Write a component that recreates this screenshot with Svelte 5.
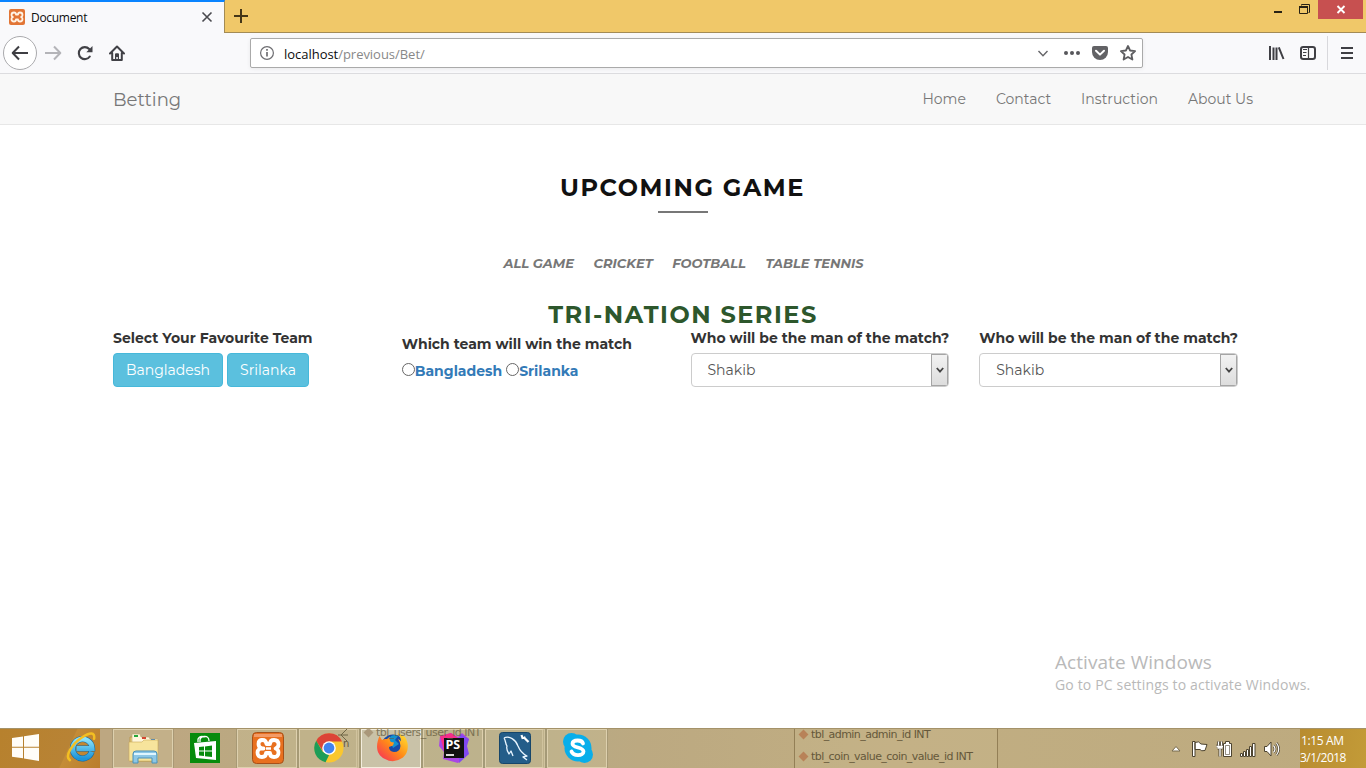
<script>
  const links = ['Home', 'Contact', 'Instruction', 'About Us'];
  const filters = ['ALL GAME', 'CRICKET', 'FOOTBALL', 'TABLE TENNIS'];
</script>

<div class="screen">
  <header class="titlebar">
    <div class="tab">
      <svg class="favicon" width="16" height="16" viewBox="0 0 32 32"><rect width="32" height="32" rx="4" fill="#e27535" /><path d="M10 7q4 0 4 4h4q0-4 4-4 5 0 5 5 0 3-3 4 3 1 3 4 0 5-5 5-4 0-4-4h-4q0 4-4 4-5 0-5-5 0-3 3-4-3-1-3-4 0-5 5-5z" fill="none" stroke="#fff3e5" stroke-width="3.600" stroke-linejoin="round" /></svg>
      <span class="tab-title">Document</span>
      <svg class="tab-close" width="12" height="12" viewBox="0 0 12 12"><path d="M1.500 1.500l9 9M10.500 1.500l-9 9" stroke="#4a4a4f" stroke-width="1.600" /></svg>
    </div>
    <svg class="plus" width="14" height="14" viewBox="0 0 14 14"><path d="M7 0v14M0 7h14" stroke="#443618" stroke-width="2" /></svg>
    <div class="controls">
      <svg width="92" height="19" viewBox="0 0 92 19"><path d="M0 12h8" stroke="#282214" stroke-width="2" /><g fill="none" stroke="#282214"><path d="M27.500 5.500v-1h8v8h-1" /><path d="M25.500 6.500h8v7h-8z" /><path d="M25 7h9" stroke-width="2" /></g></svg>
      <div class="close"><svg width="10" height="9" viewBox="0 0 10 9"><path d="M1.500 1l7 7M8.500 1l-7 7" stroke="#fff" stroke-width="1.900" /></svg></div>
    </div>
  </header>

  <div class="toolbar">
    <div class="nav-icons">
      <span class="back"><svg width="18" height="16" viewBox="0 0 18 16"><path d="M17 8H2M8 1.500L1.700 8 8 14.500" fill="none" stroke="#3e3e43" stroke-width="2" stroke-linejoin="round" /></svg></span>
      <svg class="fwd" width="17" height="16" viewBox="0 0 17 16"><path d="M0 8h15M9 1.500L15.300 8 9 14.500" fill="none" stroke="#b4b4b8" stroke-width="2" stroke-linejoin="round" /></svg>
      <svg class="reload" width="16" height="16" viewBox="0 0 16 16"><path d="M12.800 11.500A6 6 0 1 1 12.200 4" fill="none" stroke="#414146" stroke-width="2.100" stroke-linecap="round" /><path d="M15.500 1v6.200H9.300z" fill="#414146" /></svg>
      <svg class="home" width="16" height="16" viewBox="0 0 16 16"><path d="M1 8.500l7-7 7 7M3.200 8v7h9.600V8" fill="none" stroke="#414146" stroke-width="2" stroke-linecap="round" stroke-linejoin="round" /><path d="M6 15V9.300q0-1 1-1h2q1 0 1 1V15H8.800v-3H7.300v3z" fill="#414146" /></svg>
    </div>
    <div class="address">
      <svg width="16" height="16" viewBox="0 0 16 16"><circle cx="8" cy="8" r="6.400" fill="none" stroke="#6e6e72" stroke-width="1.200" /><path d="M8 7v4.500M8 4v1.800" stroke="#6e6e72" stroke-width="1.700" /></svg>
      <span class="url"><b>localhost</b>/previous/Bet/</span>
      <svg class="addr-icons" width="104" height="18" viewBox="0 0 104 18">
        <path d="M4.500 7l4.500 4.700L13.500 7" fill="none" stroke="#656568" stroke-width="1.400" />
        <g fill="#57575b"><circle cx="32" cy="9" r="2" /><circle cx="38" cy="9" r="2" /><circle cx="44" cy="9" r="2" /></g>
        <path d="M60 1.900h12q2 0 2 2V8a8 8 0 0 1-16 0V3.900q0-2 2-2z" fill="#626265" /><path d="M62 6.800l4 3.800 4-3.800" fill="none" stroke="#fff" stroke-width="2" stroke-linecap="round" stroke-linejoin="round" />
        <path d="M94 2l2.100 4.500 5 .6-3.700 3.400 1 5L94 13l-4.400 2.500 1-5-3.700-3.400 5-.6z" fill="none" stroke="#5d5d60" stroke-width="1.800" stroke-linejoin="round" />
      </svg>
    </div>
    <svg class="right-icons" width="98" height="34" viewBox="0 0 98 34">
      <path d="M2 10v14M5.500 11.500V24M8.500 11.500V24M10.800 11.300L15.500 23" stroke="#3f3f44" stroke-width="2" />
      <rect x="33" y="11" width="14" height="12" rx="2.200" fill="none" stroke="#3f3f44" stroke-width="2" /><path d="M40.500 11v12" stroke="#3f3f44" stroke-width="1.200" /><path d="M35 13.500h4M35 16.500h3.500M35 19.500h3" stroke="#3f3f44" />
      <path d="M59.500 0v34" stroke="#d8d8dc" /><path d="M73 12h12M73 17h12M73 22h12" stroke="#3f3f44" stroke-width="2" />
    </svg>
  </div>

  <nav class="navbar">
    <span class="brand">Betting</span>
    <div class="links">{#each links as l}<a class="link" href="#top">{l}</a>{/each}</div>
  </nav>

  <main>
    <h2 class="heading">UPCOMING GAME</h2>
    <div class="rule"></div>
    <div class="filters">{#each filters as f}<span>{f}</span>{/each}</div>
    <h2 class="series">TRI-NATION SERIES</h2>
    <div class="grid">
      <section>
        <div class="label">Select Your Favourite Team</div>
        <div class="buttons"><button class="b1">Bangladesh</button><button class="b2">Srilanka</button></div>
      </section>
      <section class="win">
        <div class="label">Which team will win the match</div>
        <div class="radios"><i></i><span class="r1">Bangladesh</span><i></i><span>Srilanka</span></div>
      </section>
      {#each [0, 1] as n}
        <section>
          <div class="label">Who will be the man of the match?</div>
          <div class="select"><span>Shakib</span><div class="arrow"><svg width="8" height="7" viewBox="0 0 8 7"><path d="M.8 1L4 4.700 7.200 1" fill="none" stroke="#444" stroke-width="1.800" /></svg></div></div>
        </section>
      {/each}
    </div>
  </main>

  <div class="watermark"><div class="w1">Activate Windows</div><div class="w2">Go to PC settings to activate Windows.</div></div>

  <footer class="taskbar">
    <div class="ghost panel"><div><i></i><span>tbl_admin_admin_id INT</span></div><div><i></i><span>tbl_coin_value_coin_value_id INT</span></div></div>
    <div class="start">
      <svg width="27" height="27" viewBox="0 0 27 27"><path d="M0 4l11-1.600v10.400H0zM12 2.300L27 0v12.800H12zM0 13.800h11v10.500L0 22.700zM12 13.800h15V27l-15-2.400z" fill="#fffdf8" /></svg>
      <svg class="ie" width="31" height="31" viewBox="0 0 32 32">
        <defs><linearGradient id="ieg" x1="0" y1="0" x2="0" y2="1"><stop offset="0" stop-color="#8be3fb" /><stop offset="1" stop-color="#1d94d8" /></linearGradient></defs>
        <path d="M26.500 20.500A10 10 0 1 1 27 17H11" fill="none" stroke="#15699f" stroke-width="6.200" />
        <path d="M26.500 20.500A10 10 0 1 1 27 17H11" fill="none" stroke="url(#ieg)" stroke-width="5" />
        <path d="M4 29C-2 25 7 12 16 6s14-6 13 1" fill="none" stroke="#f3bf22" stroke-width="2.600" stroke-linecap="round" />
      </svg>
    </div>
    <div class="apps">
      <div class="app"><svg width="34" height="34" viewBox="0 0 34 34">
        <path d="M3 6h9l2 3h15l1 1v20H3z" fill="#ebcf7b" stroke="#ba9950" /><path d="M5 3h8l1 3h8l1 2h8v7H5z" fill="#fff7dc" stroke="#b9a775" stroke-width=".6" /><path d="M7 4h4v2H7z" fill="#25a83a" /><path d="M15 6h4v2h-4z" fill="#d44731" /><path d="M24 8h4v2h-4z" fill="#3480ce" /><path d="M2 11h13l2-2h14v21H2z" fill="#f7e49c" stroke="#caa857" stroke-width=".6" />
        <path d="M6 32v-9q0-3 3-3h18q3 0 3 3v9h-5v-5H11v5z" fill="#8dc7e5" stroke="#4b91b9" /><path d="M7 23h22" stroke="#dff6ff" stroke-width="2" /></svg></div>
      <div class="app plain"><svg width="30" height="30" viewBox="0 0 30 30"><path d="M0 0h30v30H0z" fill="#078b0c" /><path d="M4 10l22-2v19L6 25z" fill="#fff" /><path d="M10 9V7q0-3 4-3.500 5-.5 5 4.500M8 9V6q2-4 7-2" fill="none" stroke="#fff" stroke-width="1.300" /><path d="M9 14l5-.5v4H9zM15 13.400l7-.8v5h-7zM9 18.500h5V23l-5-.5zM15 18.500h7V24l-7-.8z" fill="#078b0c" /></svg></div>
      <div class="app"><svg width="32" height="32" viewBox="0 0 32 32"><rect x=".5" y=".5" width="31" height="31" rx="4" fill="#e8701f" stroke="#a65019" /><path d="M2 2h28v3H2z" fill="#f39b66" /><path d="M10.500 8q3.500 0 4 4h3.500q0-4 4-4 4.500 0 4.500 4.500 0 3-3 4 3 1 3 4 0 4.500-4.500 4.500-4 0-4-4h-4q0 4-4 4-4.500 0-4.500-4.500 0-3 3-4h3" fill="none" stroke="#fff" stroke-width="3.800" stroke-linecap="round" stroke-linejoin="round" /><path d="M10.500 8q-4 0-4 4 0 3 3 4.500" fill="none" stroke="#fff" stroke-width="3.800" /><path d="M14 16.500h5" stroke="#fff" stroke-width="2.500" /></svg></div>
      <div class="app stack"><svg width="30" height="30" viewBox="0 0 30 30"><circle cx="15" cy="15" r="14.500" fill="#fac72f" /><path d="M2.200 8A14.500 14.500 0 0 1 28 8.500H15L8.800 18z" fill="#dc4437" /><path d="M2.200 7.800l6.500 11 6.300 3.500-3.500 7A14.500 14.500 0 0 1 2.200 7.800z" fill="#1d9d58" /><circle cx="15" cy="15" r="6.800" fill="#fff" /><circle cx="15" cy="15" r="5.400" fill="#4283ef" /></svg></div>
      <div class="app active"><svg width="32" height="32" viewBox="0 0 32 32">
        <defs><linearGradient id="fox" x1="1" y1="0" x2="0" y2="1"><stop stop-color="#ffe833" /><stop offset=".5" stop-color="#ff8a18" /><stop offset="1" stop-color="#f62363" /></linearGradient></defs>
        <circle cx="17" cy="14" r="11.500" fill="#174aa7" /><path d="M13 6q4-5 9-2l-3 4 4 4-6 4z" fill="#1392cf" />
        <path d="M3.500 4l2.500 4q2-1.500 5-1l3-2.500q-1 3.500 1 5.500l3 .5-1 3-4 1.500q0 4.500 5 5 6 0 6.500-6 0-4-2.500-7 2.500 1 3 2.500 0-5-4-8.500 9 2 10.500 10 1.500 9-4.500 14.500-9 6.500-18 1.500C-1 22 0 12 3.500 4z" fill="url(#fox)" /></svg></div>
      <div class="app"><svg width="32" height="32" viewBox="0 0 32 32"><path d="M2 4l11-3 7 4 4-4 7 6-3 7 2 8-10 9-15-4 1-7-5-6z" fill="#aa46e5" /><path d="M2 4l11-3 7 5-14 13z" fill="#f52e89" /><path d="M22 2l9 5-2 7 2 8-10 9z" fill="#8148f2" /><path d="M6 6h20v20H6z" fill="#111" /><path d="M8 23h8" stroke="#fff" stroke-width="1.700" /><text x="7.500" y="17" font-family="Open Sans, sans-serif" font-size="12.500" font-weight="700" fill="#fff">PS</text></svg></div>
      <div class="app stack"><svg width="32" height="32" viewBox="0 0 32 32"><rect x=".5" y=".5" width="31" height="31" rx="3" fill="#245d89" stroke="#17466a" /><path d="M5 6c5-3 12 2 14 8 2 5 5 8 9 10l-4 1 4 3M5 6c2 3 1 5 3 8-1 3 0 5 2 8l2-3 2 5" fill="none" stroke="#e8f5ff" stroke-width="1.300" stroke-linejoin="round" /><path d="M22.500 3l1 3 3-.5M24.500 5l5 5" stroke="#fff" stroke-width="2.200" fill="none" /></svg></div>
      <div class="app"><svg width="32" height="32" viewBox="0 0 32 32"><g fill="#08aeea"><circle cx="16" cy="16" r="13.500" /><circle cx="9.500" cy="9.500" r="8.500" /><circle cx="22.500" cy="22.500" r="8.500" /></g><path d="M21 11.500c-1-4-10-4-10.500 0-.5 5 11 3 11 8 0 4.500-10 5-12 0" fill="none" stroke="#fff" stroke-width="3.800" stroke-linecap="round" /></svg></div>
    </div>
    <div class="ghost users"><i></i>tbl_users_user_id INT</div>
    <div class="ghost edge">n</div>
    <svg class="ghost crow" width="10" height="12" viewBox="0 0 10 12"><path d="M0 6h10M9 0L3 6l6 6" fill="none" stroke="#6f6747" /></svg>
    <div class="tray">
      <svg width="104" height="18" viewBox="0 0 104 18">
        <path d="M1 11L5 6.500 9 11z" fill="#fff" stroke="#766a4e" />
        <g fill="#fff" stroke="#4d4430"><path d="M21.500 1.500h2.500v15h-2.500zM24 2.500q4-2 6 1.500l6 .5-2 6q-4 1-5-1h-5z" /><path d="M52.500 3.500h2v-2h4v2h2v13h-8z" /><path d="M54.500 5.500h4v9h-4z" stroke-width=".6" /></g>
        <path d="M47.500 1.500v4M50.500 1.500v4M45.500 6h6.500M46.500 8h5M49 9v7.500" fill="none" stroke="#4d4430" stroke-width="3" /><path d="M47.500 1.500v4M50.500 1.500v4M45.500 6.500h6.500M46.500 8h5M49 9v7.500" fill="none" stroke="#fff" stroke-width="1.300" />
        <g fill="#fff" stroke="#4d4430"><path d="M69.500 13.500h2v3h-2zM72.500 11.500h2v5h-2zM75.500 9.500h2v7h-2zM78.500 6.500h2v10h-2zM81.500 3.500h2.500v13h-2.500z" /><path d="M93.500 6.500h2.500l4-4.500v14l-4-4.500h-2.500z" /></g>
      </svg>
      <svg class="waves" width="7" height="16" viewBox="0 0 7 16"><path d="M.5 4.500q3 3.500 0 7M3.500 2q4.500 6 0 12" fill="none" stroke="#4d4430" stroke-width="2.500" /><path d="M.5 4.500q3 3.500 0 7M3.500 2q4.500 6 0 12" fill="none" stroke="#fff" stroke-width="1.200" /></svg>
    </div>
    <div class="clock"><span class="time">1:15 AM</span><span class="date">3/1/2018</span></div>
  </footer>
</div>

<style>
  :global(body) { margin: 0; overflow: hidden; background: #fff; }
  * { box-sizing: border-box; }
  svg { display: block; flex: none; }
  .screen { width: 1366px; height: 768px; display: flex; flex-direction: column; position: relative; font-family: Montserrat, Inter, sans-serif; font-size: 14px; color: #333; white-space: nowrap; background: #fff; }
  .titlebar { height: 33px; flex: none; display: flex; background: #f0c869; box-shadow: inset 0 -1px #a38b55; }
  .tab { width: 225px; height: 33px; background: #f9f9fb; border-top: 2px solid #0a84ff; border-right: 1px solid #a38b55; display: flex; align-items: center; padding: 0 11px 1px 9px; font-family: "Open Sans", sans-serif; font-size: 12px; color: #0c0c0d; }
  .tab-title { margin-left: 6px; letter-spacing: -.3px; }
  .tab-close { margin-left: auto; }
  .plus { margin: 9px 0 0 9px; }
  .controls { margin-left: auto; display: flex; padding-right: 3px; }
  .controls > svg { margin-right: -40px; }
  .close { width: 45px; height: 19px; background: #c75050; display: grid; place-items: center; margin-left: -8px; }
  .toolbar { height: 41px; flex: none; display: flex; align-items: center; background: #f9f9fb; border-bottom: 1px solid #dcdcdf; }
  .nav-icons { display: flex; align-items: center; width: 250px; padding-left: 3px; }
  .back { width: 34px; height: 34px; border: 1px solid #aaaaad; border-radius: 50%; display: grid; place-items: center; background: #fff; }
  .fwd { margin-left: 8px; }
  .reload { margin-left: 15px; }
  .home { margin-left: 16px; }
  .address { width: 893px; height: 30px; border: 1px solid #aaa; border-radius: 2px; background: #fff; display: flex; align-items: center; padding: 0 4px 0 8px; box-shadow: 0 1px 4px #0001; font-family: "Open Sans", sans-serif; font-size: 13px; color: #888; }
  .url { margin-left: 9px; letter-spacing: -.03px; padding-top: 1px; }
  .url b { color: #0c0c0d; font-weight: 400; }
  .addr-icons { margin-left: auto; }
  .right-icons { margin-left: 125px; }
  .navbar { height: 51px; flex: none; background: #f8f8f8; border-bottom: 1px solid #e7e7e7; display: flex; align-items: center; justify-content: space-between; padding: 0 113px; color: #777; }
  .brand { font-size: 18px; padding-top: 1px; }
  .links { display: flex; gap: 30px; }
  .link { color: #777; text-decoration: none; }
  main { padding: 50px 113px 0; display: flex; flex-direction: column; align-items: center; }
  h2 { margin: 0; font-size: 24px; line-height: 26px; height: 26px; font-weight: 700; color: #111; }
  .heading { letter-spacing: 1.550px; padding-right: 1px; }
  .rule { width: 50px; height: 2px; background: #777; margin-top: 10px; }
  .filters { display: flex; gap: 19.500px; margin-top: 40px; padding-left: 1px; height: 20px; line-height: 20px; font-size: 13px; font-style: italic; font-weight: 700; color: #777; }
  .series { margin-top: 29px; color: #2d572c; letter-spacing: 1.500px; }
  .grid { display: grid; grid-template-columns: repeat(4, 258.750px); gap: 30px; width: 1125px; align-self: flex-start; }
  .label { height: 20px; line-height: 20px; font-weight: 700; margin-bottom: 5px; }
  .win { padding-top: 6px; }
  .buttons { display: flex; gap: 4px; }
  button { height: 34px; border: 1px solid #46b8da; border-radius: 4px; background: #5bc0de; color: #fff; font: 14px Montserrat, Inter, sans-serif; padding: 0; }
  .b1 { width: 110px; }
  .b2 { width: 82px; }
  .radios { height: 22px; display: flex; align-items: center; color: #337ab7; font-weight: 700; padding-top: 1px; }
  .radios i { width: 13px; height: 13px; border: 1px solid #666; border-radius: 50%; margin-top: -3px; }
  .r1 { margin-right: 4px; }
  .select { height: 34px; border: 1px solid #ccc; border-radius: 4px; display: flex; align-items: center; color: #555; padding-left: 16px; overflow: hidden; }
  .arrow { margin-left: auto; width: 17px; height: 32px; border: 1px solid #a5a5a5; background: linear-gradient(#f2f2f2, #ddd); display: grid; place-items: center; }
  .watermark { position: absolute; left: 1055px; top: 649px; font-family: "Open Sans", sans-serif; color: #b9b9b9; }
  .w1 { font-size: 19px; line-height: 26px; letter-spacing: .06px; }
  .w2 { font-size: 14px; line-height: 20px; letter-spacing: .16px; }
  .taskbar { height: 40px; margin-top: auto; flex: none; display: flex; position: relative; background: linear-gradient(90deg, #bda781, #bda781 170px, #b8aa82 320px, #b4aa86 500px, #bca981 640px, #c1ae82 900px, #bdaa7f 1366px); border-top: 1px solid #a49269; overflow: hidden; font-family: "Open Sans", sans-serif; }
  .start { width: 100px; background: linear-gradient(115deg, #b7812d, #b88335 65%, #c48c37 66%, #ba7d2c); display: flex; align-items: center; padding: 0 0 2px 12px; gap: 27px; }
  .apps { display: flex; gap: 2px; margin-left: 13px; position: relative; }
  .app { width: 60px; height: 39px; border: 1px solid #ddd0ae; background: #d6c9a044; display: grid; place-items: center; padding: 0 0 1px 1px; box-shadow: 0 0 0 1px #817a5d55; }
  .plain { border-color: transparent; background: none; box-shadow: none; padding-left: 0; }
  .active { border-color: #f3eddd; background: #d6d2bf99; }
  .stack { border-right: 3px double #d0c39e; padding-left: 2px; }
  .ghost { position: absolute; color: #65583a; font-family: "DejaVu Sans", sans-serif; font-size: 11px; }
  .users { left: 365px; top: -3px; line-height: 13px; color: #655c40; opacity: .75; letter-spacing: -.55px; display: flex; align-items: center; gap: 4px; }
  .users i { width: 7px; height: 7px; background: #a08a6c; transform: rotate(45deg); }
  .edge { left: 343px; top: 8px; line-height: 14px; font-size: 10px; }
  .crow { left: 338px; top: 0; }
  .panel { left: 794px; top: -1px; width: 204px; height: 41px; border: solid #937f56; border-width: 0 1px; padding-left: 4px; background: #c8b78b66; }
  .panel div { display: flex; align-items: center; gap: 4px; height: 22px; margin-top: -5px; }
  .panel div + div { margin-top: 0; }
  .panel i { width: 7px; height: 7px; background: #b88258; transform: rotate(45deg); margin-left: 1px; }
  .panel span { letter-spacing: -.56px; }
  .tray { margin-left: auto; display: flex; align-items: center; margin-right: 20px; }
  .waves { margin-left: -2px; }
  .clock { width: 66px; background: linear-gradient(100deg, #b88c30, #c39b38); color: #fff; display: flex; flex-direction: column; font-size: 12px; line-height: 17px; padding: 3px 0 0; }
  .time { padding-left: 1px; letter-spacing: -.35px; }
  .date { letter-spacing: -.5px; }
</style>
